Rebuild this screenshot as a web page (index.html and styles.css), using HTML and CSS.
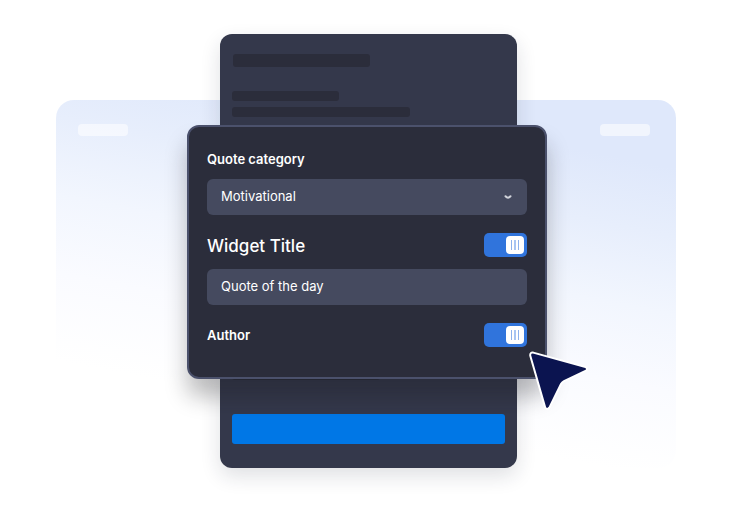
FILE: index.html
```html
<!DOCTYPE html>
<html lang="en">
    <head>
        <meta charset="utf-8">
        <title>Quote widget</title>
        <link rel="stylesheet" href="styles.css">
    </head>
    <body>
        <main class="scene">
            <div class="backdrop">
                <span class="pill"></span>
                <span class="pill"></span>
            </div>
            <div class="device">
                <div class="bar bar-title"></div>
                <div class="bar bar-short"></div>
                <div class="bar bar-long"></div>
                <div class="bar bar-last"></div>
                <button class="save" type="button" aria-label="Save"></button>
            </div>
            <form class="panel">
                <label class="label" for="category">Quote category</label>
                <div class="select">
                    <select class="field" id="category">
                        <option>Motivational</option>
                    </select>
                    <svg class="chevron" width="8" height="5" viewBox="0 0 8 5">
                        <path d="M1.5 1.3 Q4 4 6.5 1.3" fill="none" stroke="#d0d3da" stroke-width="2" stroke-linecap="round"/>
                    </svg>
                </div>
                <div class="row">
                    <label class="heading" for="titleOn">Widget Title</label>
                    <input class="toggle" id="titleOn" type="checkbox" checked>
                </div>
                <input class="field" type="text" value="Quote of the day" aria-label="Widget title text">
                <div class="row">
                    <label class="label" for="authorOn">Author</label>
                    <input class="toggle" id="authorOn" type="checkbox" checked>
                </div>
                <svg class="cursor" width="64" height="64" viewBox="0 0 64 64">
                    <path d="M7.2 4.6 L59.5 19 Q62.5 20.5 60 22.7 L38 33.2 Q36 34.3 35 36 L23.5 59.5 Q21 62.5 19.2 59.5 L4.2 7.5 Q4 4.2 7.2 4.6 Z" fill="#0b1450" stroke="#fff" stroke-width="2" stroke-linejoin="round"/>
                </svg>
            </form>
        </main>
    </body>
</html>
```
FILE: styles.css
```css
*{
    box-sizing: border-box;
    margin: 0;
    padding: 0;
}
body{
    background-color: #fff;
    font-family: Inter, "Liberation Sans", sans-serif;
    color: #fff;
}
/* the three layers share one grid cell */
.scene{
    display: grid;
    padding: 34px 0 44px;
}
.backdrop, .device, .panel{
    grid-area: 1 / 1;
}
.backdrop{
    display: flex;
    justify-content: space-between;
    margin: 66px 60px 0 56px;
    padding: 24px 26px 24px 22px;
    border-radius: 18px;
    background: linear-gradient(191deg, #dfe8fb 14%, #e7eefc 28%, #f2f6fe 44%, #fafbff 60%, #fff 78%);
}
.pill{
    width: 50px;
    height: 12px;
    border-radius: 4px;
    background-color: rgba(255,255,255,0.55);
}
.device{
    display: flex;
    flex-direction: column;
    justify-self: center;
    width: 297px;
    height: 434px;
    margin-left: 1px;
    padding: 20px 12px 24px;
    border-radius: 12px;
    background-color: #34384b;
    box-shadow: 0 8px 20px rgba(30,34,60,0.14);
}
.bar{
    height: 10px;
    border-radius: 3px;
    background-color: #2b2d3b;
}
.bar-title{
    width: 137px;
    height: 13px;
    margin-left: 1px;
    margin-bottom: 24px;
}
.bar-short{
    width: 107px;
    margin-bottom: 6px;
}
.bar-long{
    width: 178px;
}
.bar-last{
    width: 148px;
    margin-top: auto;
    margin-bottom: 34px;
}
.save{
    height: 30px;
    border: 0;
    border-radius: 3px;
    background-color: #0077e6;
}
.panel{
    position: relative;
    display: flex;
    flex-direction: column;
    align-self: start;
    justify-self: center;
    width: 360px;
    margin-top: 91px;
    margin-right: 2px;
    padding: 22px 18px 30px;
    border: 2px solid #4b516c;
    border-radius: 12px;
    background-color: #2b2d3b;
    box-shadow: 0 18px 22px rgba(20,20,26,0.28);
}
.label{
    font-size: 13px;
    font-weight: 600;
    line-height: 20px;
}
.heading{
    padding-top: 2px;
    font-size: 17px;
    font-weight: 500;
    line-height: 22px;
}
.select{
    display: grid;
    align-items: center;
    margin-top: 10px;
}
.select .field, .chevron{
    grid-area: 1 / 1;
}
.chevron{
    justify-self: end;
    margin-right: 15px;
    pointer-events: none;
}
.field{
    width: 100%;
    height: 36px;
    padding: 0 14px 2px;
    border: 0;
    border-radius: 6px;
    background-color: #454a5f;
    color: #fff;
    font-family: inherit;
    font-size: 13px;
    appearance: none;
}
.row{
    display: flex;
    align-items: center;
    justify-content: space-between;
    margin-top: 18px;
    margin-bottom: 12px;
}
.row:last-of-type{
    margin-bottom: 0;
}
.toggle{
    display: flex;
    align-items: center;
    width: 43px;
    height: 24px;
    padding: 0 3px;
    border-radius: 5px;
    background-color: #454a5f;
    appearance: none;
}
.toggle:checked{
    justify-content: flex-end;
    background-color: #3074dc;
}
/* knob with three grip lines */
.toggle::before{
    content: "";
    width: 18px;
    height: 18px;
    border-radius: 4px;
    background: linear-gradient(90deg, #8db1ec 1px, #fff 1px 3px, #a9c5f2 3px 5px, #fff 5px 7px, #8db1ec 7px) center / 8px 10px no-repeat #fff;
}
.cursor{
    position: absolute;
    top: 221px;
    left: 337px;
}
```
